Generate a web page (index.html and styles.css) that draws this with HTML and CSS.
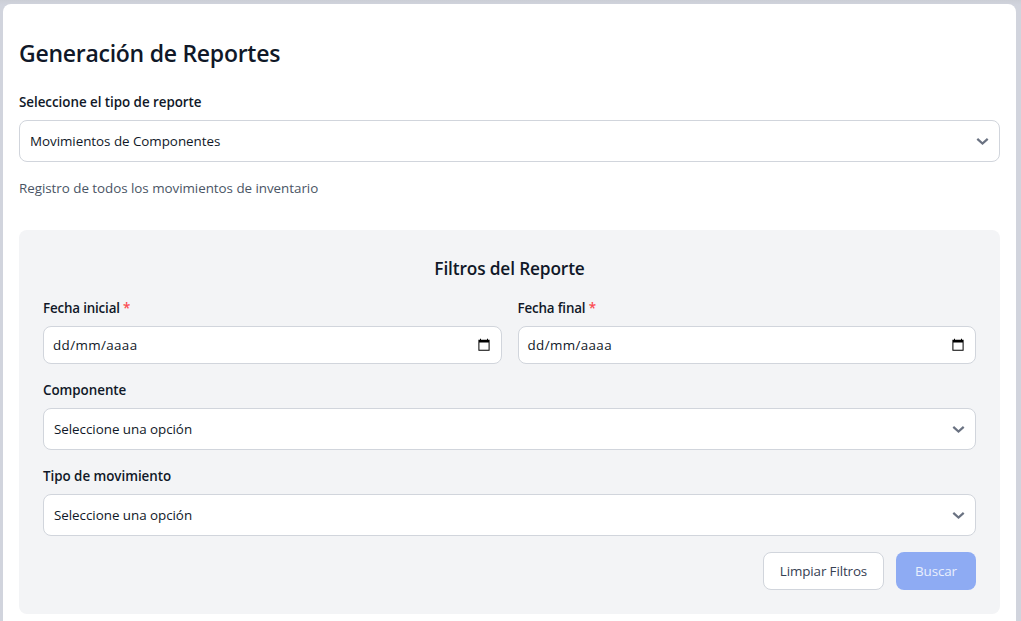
FILE: index.html
```html
<!DOCTYPE html>
<html lang="es">
<head>
<meta charset="utf-8">
<title>Generación de Reportes</title>
<link rel="stylesheet" href="styles.css">
</head>
<body>
<main class="card">
  <h1 class="title">Generación de Reportes</h1>
  <label class="label">Seleccione el tipo de reporte</label>
  <div class="control select">
    <span>Movimientos de Componentes</span>
    <svg class="chevron" viewBox="0 0 20 20"><path d="M5.300 7.900l5.200 4.700L15.700 7.900"/></svg>
  </div>
  <p class="hint">Registro de todos los movimientos de inventario</p>
  <section class="panel">
    <h2 class="subtitle">Filtros del Reporte</h2>
    <div class="dates">
      <div>
        <label class="label required">Fecha inicial <span class="req">*</span></label>
        <div class="control date"><span class="placeholder">dd/mm/aaaa</span>
          <svg class="calendar" viewBox="0 0 14 14"><path d="M3 .8h1v1h6v-1h1v1h1.600v11H1.400v-11H3zM2.400 4.500v7.300h9.200V4.500z" fill-rule="evenodd"/></svg>
        </div>
      </div>
      <div>
        <label class="label required">Fecha final <span class="req">*</span></label>
        <div class="control date"><span class="placeholder">dd/mm/aaaa</span>
          <svg class="calendar" viewBox="0 0 14 14"><path d="M3 .8h1v1h6v-1h1v1h1.600v11H1.400v-11H3zM2.400 4.500v7.300h9.200V4.500z" fill-rule="evenodd"/></svg>
        </div>
      </div>
    </div>
    <div class="field">
      <label class="label">Componente</label>
      <div class="control select"><span>Seleccione una opción</span>
        <svg class="chevron" viewBox="0 0 20 20"><path d="M5.300 7.900l5.200 4.700L15.700 7.900"/></svg>
      </div>
    </div>
    <div class="field">
      <label class="label">Tipo de movimiento</label>
      <div class="control select"><span>Seleccione una opción</span>
        <svg class="chevron" viewBox="0 0 20 20"><path d="M5.300 7.900l5.200 4.700L15.700 7.900"/></svg>
      </div>
    </div>
    <div class="actions">
      <button class="btn clear" type="button">Limpiar Filtros</button>
      <button class="btn search" type="button">Buscar</button>
    </div>
  </section>
</main>
</body>
</html>
```
FILE: styles.css
```css
* { box-sizing: border-box; }
body {
  margin: 0;
  height: 621px;
  overflow: hidden;
  padding: 4px 5px 0 3px;
  background: linear-gradient(#cbced6, #d1d4dd 5px);
  font: 13.4px/20px "Open Sans", "Noto Sans", sans-serif;
  letter-spacing: -0.04px;
  color: #101828;
}
.card {
  height: 640px;
  padding: 33px 16px 0;
  background: #fff;
  border-radius: 8px;
}
h1, h2, p { margin: 0; }
.title { font-size: 23px; line-height: 32px; font-weight: 600; margin-bottom: 23px; letter-spacing: -0.26px; }
.label { display: block; font-weight: 600; margin-bottom: 8px; letter-spacing: -0.04px; }
.required { letter-spacing: -0.18px; }
.control {
  display: flex;
  align-items: center;
  justify-content: space-between;
  background: #fff;
  border: 1px solid #d1d5dc;
  border-radius: 8px;
}
.select { height: 42px; padding: 0 7px 0 10px; }
.date { height: 38px; padding: 0 10px 0 9px; }
.placeholder { letter-spacing: 0.37px; }
.chevron { width: 20px; height: 20px; fill: none; stroke: #6a7282; stroke-width: 2.2; }
.calendar { width: 14px; height: 14px; fill: #000; }
.hint { margin-top: 16px; color: #4a5565; }
.panel {
  height: 384px;
  margin-top: 32px;
  padding: 25px 24px 24px;
  background: #f3f4f6;
  border-radius: 8px;
}
.subtitle { font-size: 17.3px; line-height: 28px; font-weight: 600; text-align: center; margin-bottom: 15px; letter-spacing: -0.15px; }
.dates { display: grid; grid-template-columns: 1fr 1fr; column-gap: 16px; }
.field { margin-top: 16px; }
.req { color: #fb4a50; }
.actions { display: flex; justify-content: flex-end; gap: 12px; margin-top: 16px; }
.btn { height: 38px; padding: 0; border-radius: 8px; font: inherit; letter-spacing: -0.12px; }
.clear { width: 121px; background: #fff; border: 1px solid #d1d5dc; color: #364153; }
.search { width: 80px; background: #8eabf3; border: 0; color: #e9effd; }
```
